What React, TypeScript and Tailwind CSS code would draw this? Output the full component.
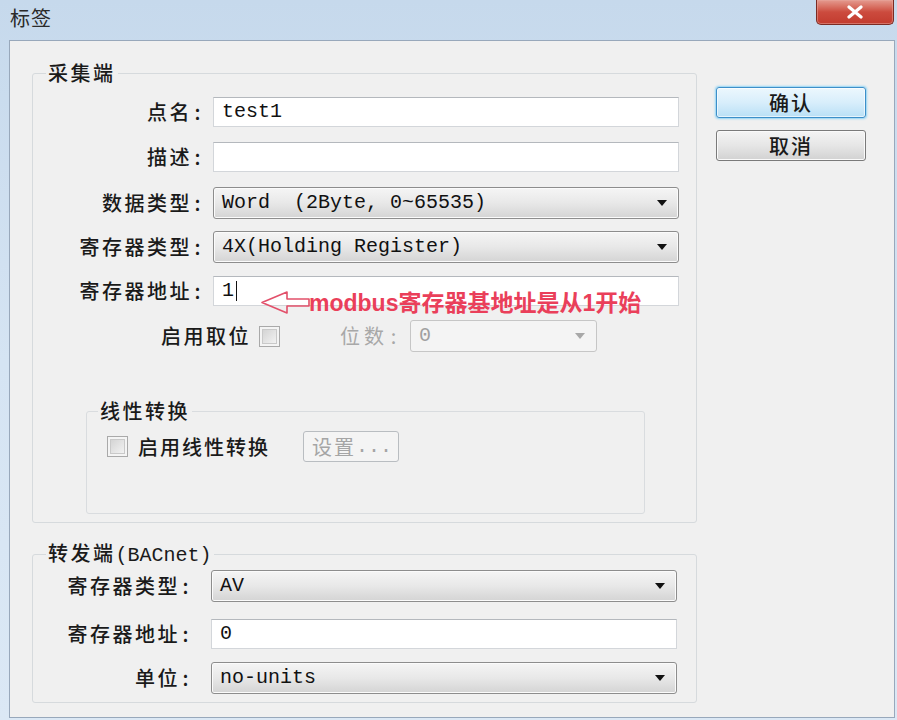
import React from "react";

const MONO = "font-['Liberation_Mono','Noto_Sans_CJK_SC',monospace]";

function Label({ text, width }: { text: string; width: string }) {
  return (
    <div className={`${width} shrink-0 text-right text-[20px] font-medium leading-[24px] tracking-[2.5px] text-[#1a1a1a] whitespace-nowrap`}>
      {text}
      <span className="inline-block w-[11px] text-center tracking-normal">:</span>
    </div>
  );
}

function TextBox({ children }: { children?: React.ReactNode }) {
  return (
    <div className={`flex h-[30px] w-[466px] items-center border border-[#d3d6da] border-t-[#b4b8bd] bg-white pl-[8px] text-[20px] text-[#111111] whitespace-pre ${MONO}`}>
      {children}
    </div>
  );
}

function Arrow({ color }: { color: string }) {
  return (
    <svg width="10" height="6" viewBox="0 0 10 6" className="shrink-0">
      <path d="M0 0H10L5 6Z" fill={color} />
    </svg>
  );
}

function Combo({ value }: { value: string }) {
  return (
    <div className="flex h-[32px] w-[466px] items-center rounded-[3px] border border-[#8d8d8d] bg-linear-to-b from-[#f5f5f5] via-[#e8e8e8] to-[#d4d4d4] pl-[8px] pr-[11px] shadow-[inset_0_0_0_1px_#fbfbfb]">
      <span className={`flex-1 text-[20px] leading-none text-[#111111] whitespace-pre ${MONO}`}>{value}</span>
      <Arrow color="#111111" />
    </div>
  );
}

function CheckBox() {
  return (
    <div className="h-[21px] w-[21px] shrink-0 border border-[#a9a9a9] bg-[#f4f4f4] p-[2px]">
      <div className="h-full w-full border border-[#c9c9c9] bg-linear-to-br from-[#d4d4d4] to-[#f2f2f2]" />
    </div>
  );
}

export default function App() {
  return (
    <div className="relative h-[720px] w-[897px] overflow-hidden bg-linear-to-b from-[#c6d9ec] via-[#d5e4f3] to-[#dbe8f5] font-['Noto_Sans_CJK_SC',sans-serif]">
      {/* title bar */}
      <div className="flex h-[40px] items-start justify-between">
        <div className="ml-[10px] mt-[6px] text-[20px] leading-[24px] tracking-[1px] text-[#2a2a2a]">标签</div>
        <div className="mr-[3px] flex h-[25px] w-[78px] items-center justify-center rounded-b-[5px] border border-t-0 border-[#7b2b23] bg-linear-to-b from-[#e49a8f] via-[#cc4b3e] to-[#c23b2e] shadow-[inset_0_0_0_1px_#e8a89e80]">
          <svg width="18" height="14" viewBox="0 0 18 14">
            <path d="M3 2L15 12M15 2L3 12" stroke="#ffffff" strokeWidth="3.2" strokeLinecap="round" />
          </svg>
        </div>
      </div>

      {/* client area */}
      <div className="ml-[9px] mr-[2px] flex h-[678px] border border-[#98a8bb] bg-[#f0f0f0]">
        {/* left column */}
        <div className="ml-[22px] mt-[20px] flex w-[665px] flex-col">
          {/* 采集端 */}
          <fieldset className="rounded-[3px] border border-[#d6dadd] pb-[8px]">
            <legend className="ml-[13px] px-[2px] text-[20px] font-medium leading-[24px] tracking-[2.5px] text-[#1a1a1a]">采集端</legend>
            <div className="flex flex-col">
              <div className="mt-[12px] flex h-[30px] items-center">
                <Label text="点名" width="w-[170px]" />
                <div className="ml-[10px]">
                  <TextBox>test1</TextBox>
                </div>
              </div>
              <div className="mt-[15px] flex h-[30px] items-center">
                <Label text="描述" width="w-[170px]" />
                <div className="ml-[10px]">
                  <TextBox />
                </div>
              </div>
              <div className="mt-[15px] flex h-[32px] items-center">
                <Label text="数据类型" width="w-[170px]" />
                <div className="ml-[10px]">
                  <Combo value="Word  (2Byte, 0~65535)" />
                </div>
              </div>
              <div className="mt-[12px] flex h-[32px] items-center">
                <Label text="寄存器类型" width="w-[170px]" />
                <div className="ml-[10px]">
                  <Combo value="4X(Holding Register)" />
                </div>
              </div>
              <div className="mt-[13px] flex h-[30px] items-center">
                <Label text="寄存器地址" width="w-[170px]" />
                <div className="relative ml-[10px]">
                  <TextBox>
                    1<span className="ml-[2px] inline-block h-[20px] w-[1px] bg-[#111]" />
                  </TextBox>
                  <svg className="absolute left-[48px] top-[14px]" width="50" height="26" viewBox="0 0 50 26">
                    <path d="M1 12.5L26 2V9H48V16H26V23Z" fill="none" stroke="#e2506a" strokeWidth="1.6" strokeLinejoin="round" />
                  </svg>
                  <div className="absolute left-[96px] top-[13px] whitespace-nowrap text-[23px] font-semibold leading-[28px] text-[#ea3f5a] font-['Liberation_Sans','Noto_Sans_CJK_SC',sans-serif]">
                    modbus寄存器基地址是从1开始
                  </div>
                </div>
              </div>
              <div className="mt-[14px] flex h-[32px] items-center">
                <div className="ml-[128px] text-[20px] font-medium leading-[24px] tracking-[2.5px] text-[#1a1a1a]">启用取位</div>
                <div className="ml-[8px]">
                  <CheckBox />
                </div>
                <div className="ml-[60px] text-[20px] leading-[24px] tracking-[4px] text-[#a8a8a8]">
                  位数<span className="inline-block w-[11px] text-center tracking-normal">:</span>
                </div>
                <div className="ml-[11px] flex h-[32px] w-[187px] items-center rounded-[3px] border border-[#c6c6c6] bg-[#f4f4f4] pl-[8px] pr-[11px]">
                  <span className={`flex-1 text-[20px] leading-none text-[#a0a0a0] ${MONO}`}>0</span>
                  <Arrow color="#a8a8a8" />
                </div>
              </div>

              {/* 线性转换 */}
              <fieldset className="ml-[53px] mt-[47px] h-[115px] w-[559px] rounded-[3px] border border-[#d9dcdf]">
                <legend className="ml-[11px] px-[2px] text-[20px] font-medium leading-[24px] tracking-[2.5px] text-[#1a1a1a]">线性转换</legend>
                <div className="mt-[8px] flex h-[31px] items-center pl-[20px]">
                  <CheckBox />
                  <div className="ml-[10px] text-[20px] font-medium leading-[24px] tracking-[2px] text-[#1a1a1a]">启用线性转换</div>
                  <div className="ml-[33px] flex h-[31px] w-[96px] items-center rounded-[3px] border border-[#b9bdc1] bg-[#f4f4f4] pl-[8px] text-[20px] leading-none text-[#a5a5a5]">
                    <span className="tracking-[2px]">设置</span>
                    <span className={MONO}>...</span>
                  </div>
                </div>
              </fieldset>
            </div>
          </fieldset>

          {/* 转发端 */}
          <fieldset className="mt-[18px] rounded-[3px] border border-[#d6dadd] pb-[8px]">
            <legend className="ml-[13px] px-[2px] text-[20px] font-medium leading-[24px] text-[#1a1a1a]">
              <span className="tracking-[2.5px]">转发端</span>
              <span className={`font-normal ${MONO}`}>(BACnet)</span>
            </legend>
            <div className="flex flex-col">
              <div className="mt-[2px] flex h-[32px] items-center">
                <Label text="寄存器类型" width="w-[158px]" />
                <div className="ml-[20px]">
                  <Combo value="AV" />
                </div>
              </div>
              <div className="mt-[17px] flex h-[30px] items-center">
                <Label text="寄存器地址" width="w-[158px]" />
                <div className="ml-[20px]">
                  <TextBox>0</TextBox>
                </div>
              </div>
              <div className="mt-[13px] flex h-[32px] items-center">
                <Label text="单位" width="w-[158px]" />
                <div className="ml-[20px]">
                  <Combo value="no-units" />
                </div>
              </div>
            </div>
          </fieldset>
        </div>

        {/* right column buttons */}
        <div className="ml-[19px] mt-[46px] flex w-[150px] flex-col gap-[12px]">
          <div className="flex h-[31px] items-center justify-center rounded-[3px] border border-[#3d8fc9] bg-linear-to-b from-[#ecf7fd] via-[#d8eefb] to-[#b9e0f6] text-[20px] font-medium leading-none tracking-[2px] text-[#1a1a1a] shadow-[0_0_2px_1px_#8fd3f5,inset_0_0_0_1px_#ffffffa0]">
            确认
          </div>
          <div className="flex h-[31px] items-center justify-center rounded-[3px] border border-[#7a7a7a] bg-linear-to-b from-[#f4f4f4] via-[#e6e6e6] to-[#d2d2d2] text-[20px] font-medium leading-none tracking-[2px] text-[#1a1a1a] shadow-[inset_0_0_0_1px_#fafafa]">
            取消
          </div>
        </div>
      </div>
    </div>
  );
}
